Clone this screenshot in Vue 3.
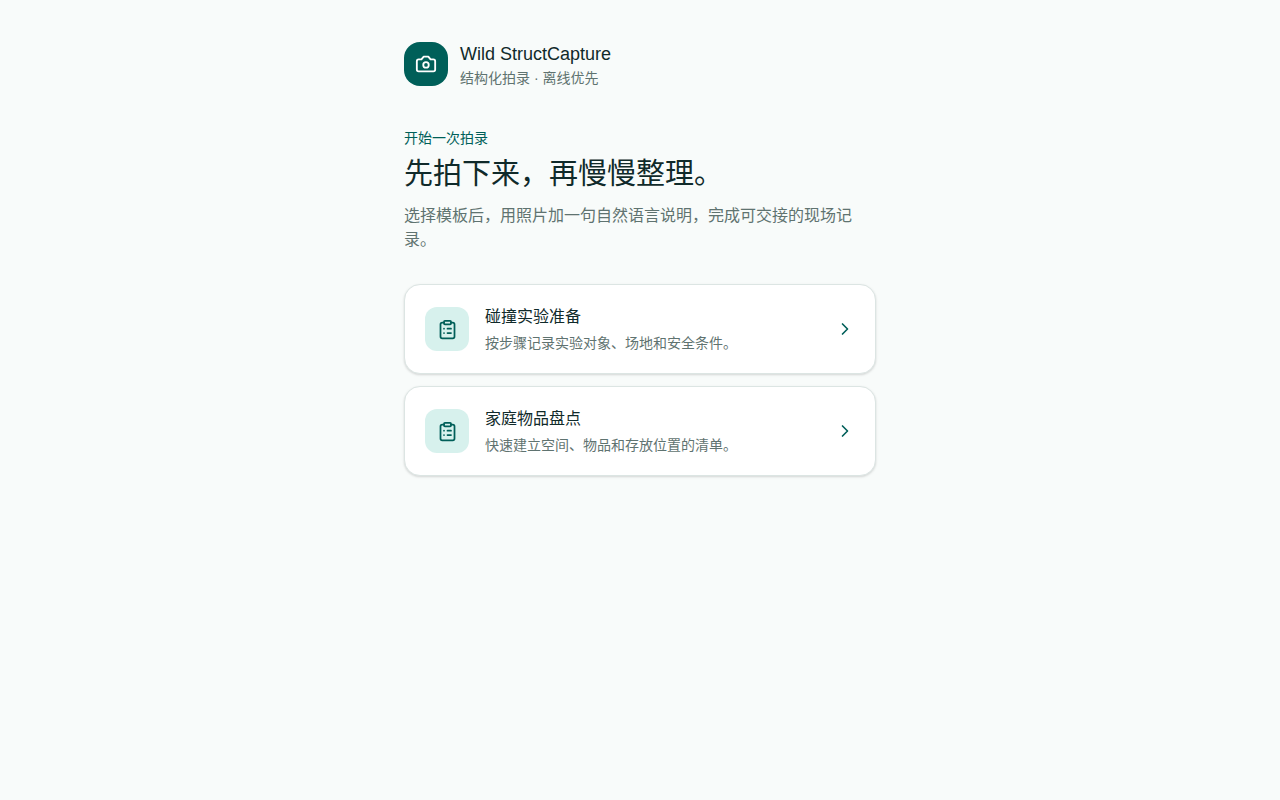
<script setup>
const templates = [
  {
    id: 'crash-test',
    name: '碰撞实验准备',
    description: '按步骤记录实验对象、场地和安全条件。'
  },
  {
    id: 'home-inventory',
    name: '家庭物品盘点',
    description: '快速建立空间、物品和存放位置的清单。'
  }
]
</script>

<template>
  <main class="page">
    <header class="brand">
      <span class="brand-mark">
        <svg class="icon" viewBox="0 0 24 24" aria-hidden="true">
          <path d="M14.5 4h-5L7 7H4a2 2 0 0 0-2 2v9a2 2 0 0 0 2 2h16a2 2 0 0 0 2-2V9a2 2 0 0 0-2-2h-3l-2.5-3z" />
          <circle cx="12" cy="13" r="3" />
        </svg>
      </span>
      <div>
        <p class="brand-name">Wild StructCapture</p>
        <p class="brand-tagline">结构化拍录 · 离线优先</p>
      </div>
    </header>

    <section class="intro">
      <p class="eyebrow">开始一次拍录</p>
      <h1>先拍下来，再慢慢整理。</h1>
      <p class="lead">选择模板后，用照片加一句自然语言说明，完成可交接的现场记录。</p>
    </section>

    <section class="template-list">
      <button v-for="item in templates" :key="item.id" type="button" class="template-card">
        <span class="template-icon">
          <svg class="icon clipboard" viewBox="0 0 24 24" aria-hidden="true">
            <rect x="8" y="2" width="8" height="4" rx="1" />
            <path d="M16 4h2a2 2 0 0 1 2 2v14a2 2 0 0 1-2 2H6a2 2 0 0 1-2-2V6a2 2 0 0 1 2-2h2" />
            <path d="M12 11h4M12 16h4M8 11h.01M8 16h.01" />
          </svg>
        </span>
        <span class="template-text">
          <span class="template-name">{{ item.name }}</span>
          <span class="template-description">{{ item.description }}</span>
        </span>
        <svg class="icon chevron" viewBox="0 0 24 24" aria-hidden="true">
          <path d="m9 18 6-6-6-6" />
        </svg>
      </button>
    </section>
  </main>
</template>

<style>
body {
  margin: 0;
  background: #f8fbfa;
}
</style>

<style scoped>
.page {
  box-sizing: border-box;
  max-width: 512px;
  margin: 0 auto;
  padding: 40px 20px;
  color: #102a2a;
  font-family: "Liberation Sans", "Noto Sans CJK SC", sans-serif;
  font-size: 16px;
  line-height: 24px;
}

p,
h1 {
  margin: 0;
  font-weight: 400;
}

.icon {
  width: 22px;
  height: 22px;
  flex-shrink: 0;
  fill: none;
  stroke: currentColor;
  stroke-width: 2;
  stroke-linecap: round;
  stroke-linejoin: round;
}

.brand {
  display: flex;
  align-items: center;
  gap: 12px;
}

.brand-mark,
.template-icon {
  display: flex;
  align-items: center;
  justify-content: center;
  width: 44px;
  height: 44px;
  flex-shrink: 0;
}

.brand-mark {
  border-radius: 16px;
  background: #005f59;
  color: #fff;
}

.brand-name {
  font-size: 18px;
  line-height: 28px;
}

.brand-tagline {
  color: #5f7370;
  font-size: 14px;
  line-height: 20px;
}

.intro {
  margin-top: 40px;
}

.eyebrow {
  color: #005f59;
  font-size: 14px;
  line-height: 20px;
}

h1 {
  margin-top: 8px;
  font-size: 29px;
  line-height: 36px;
}

.lead {
  margin-top: 12px;
  color: #5f7370;
}

.template-list {
  display: flex;
  flex-direction: column;
  gap: 12px;
  margin-top: 32px;
}

.template-card {
  display: flex;
  align-items: center;
  gap: 16px;
  width: 100%;
  padding: 20px;
  border: 1px solid #dce5e3;
  border-radius: 16px;
  background: #fff;
  box-shadow: 0 1px 3px rgba(0, 0, 0, 0.1), 0 1px 2px rgba(0, 0, 0, 0.06);
  color: inherit;
  font: inherit;
  text-align: left;
  cursor: pointer;
}

.template-icon {
  border-radius: 12px;
  background: #d7f1ed;
  color: #005f59;
}

.template-text {
  display: flex;
  flex: 1;
  flex-direction: column;
  gap: 4px;
  min-width: 0;
}

.template-description {
  color: #5f7370;
  font-size: 14px;
  line-height: 20px;
}

.clipboard {
  width: 21px;
  height: 21px;
}

.chevron {
  width: 20px;
  height: 20px;
  color: #005f59;
}
</style>
